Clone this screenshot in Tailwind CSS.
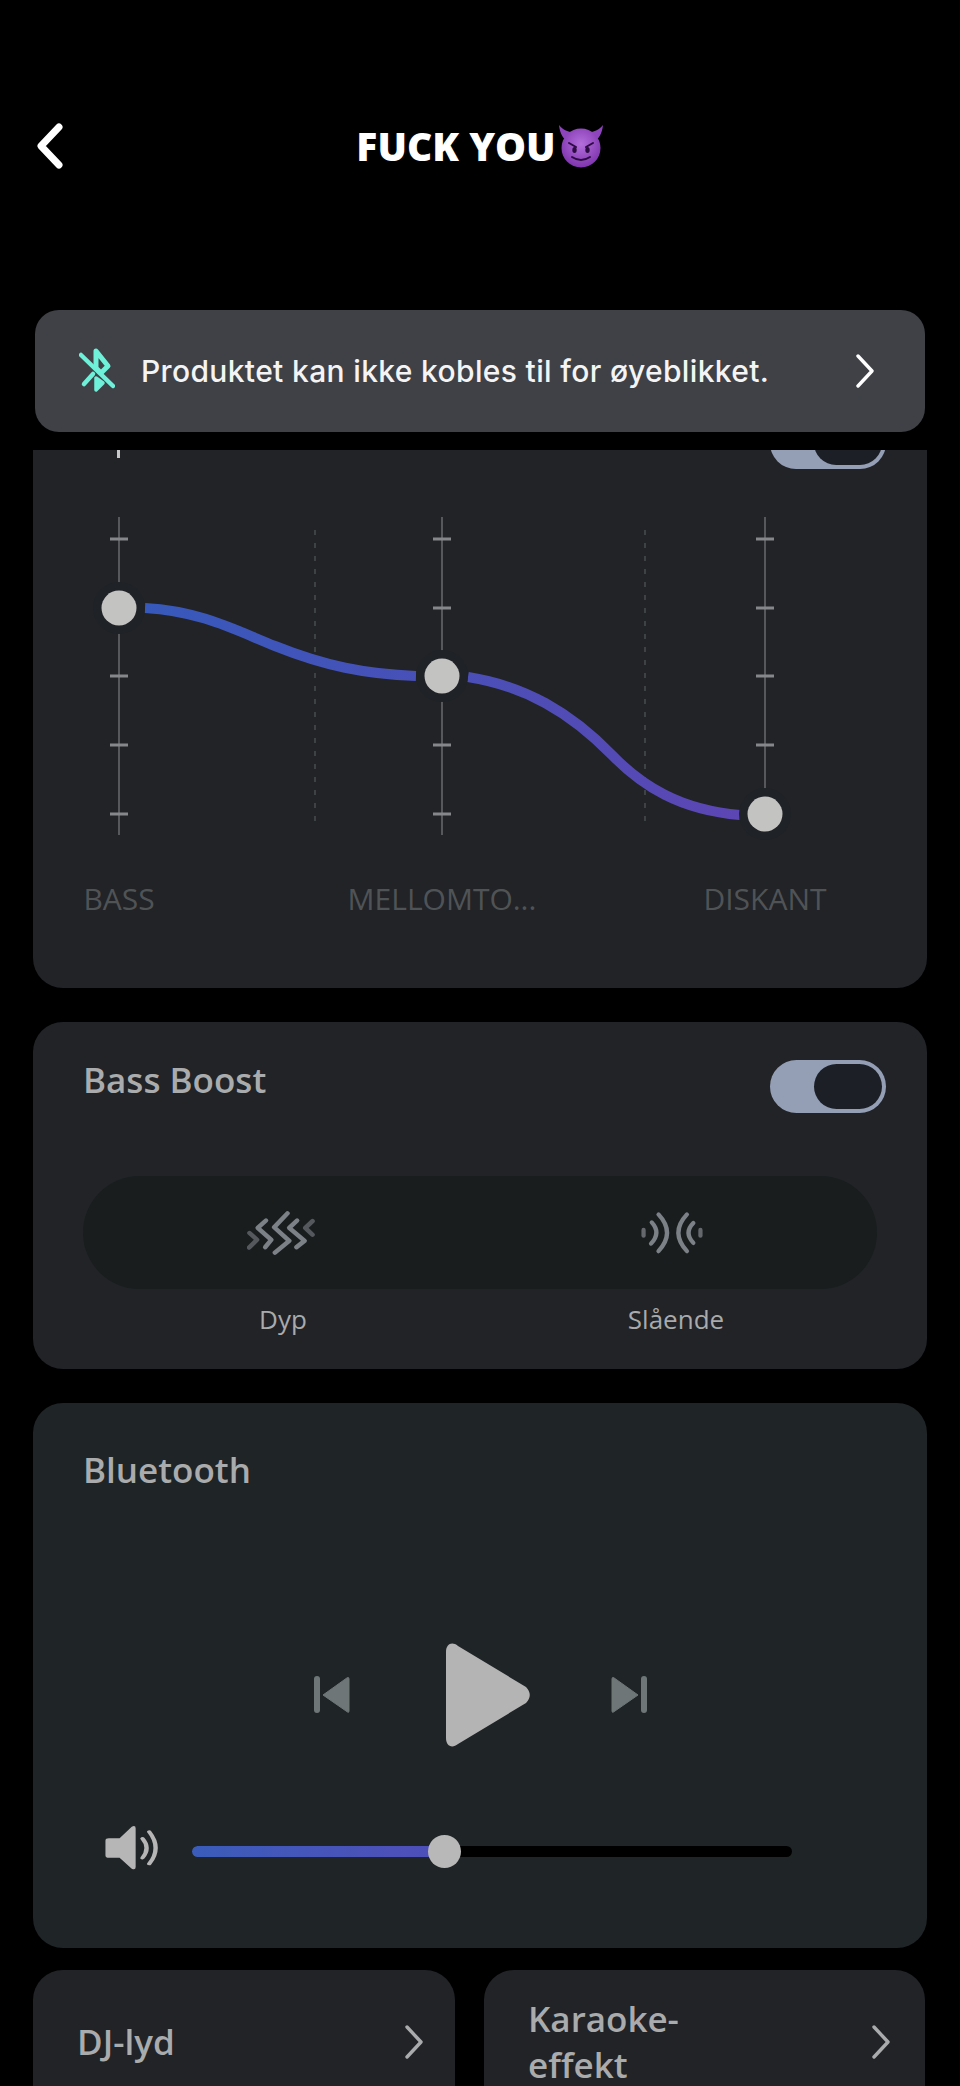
<!DOCTYPE html>
<html lang="en">
<head>
  <meta charset="UTF-8">
  <title>Equalizer</title>
  <script src="https://cdn.jsdelivr.net/npm/@tailwindcss/browser@4"></script>
</head>
<body class="bg-black font-['Open_Sans',sans-serif]">
<div class="w-[960px] h-[2086px] overflow-hidden px-[33px]">

  <!-- header -->
  <div class="relative h-[292px] pt-[121px] flex justify-center items-start">
    <svg class="absolute left-[1px] top-[122px]" width="34" height="48" viewBox="0 0 34 48" fill="none" stroke="#fff" stroke-width="7" stroke-linecap="round" stroke-linejoin="round"><path d="M25 5 L7 24 L25 43"/></svg>
    <div class="flex items-center h-[50px]">
      <span class="text-[39px] leading-[50px] font-extrabold text-white">FUCK YOU</span>
      <svg width="46" height="44" viewBox="0 0 46 44" class="mt-[-1px] ml-[2px]">
        <defs>
          <radialGradient id="face" cx="50%" cy="40%" r="65%"><stop offset="0" stop-color="#b56fdc"/><stop offset="1" stop-color="#7a30aa"/></radialGradient>
        </defs>
        <path d="M1 1 C2 10 5 15 11 18 L17 9 C10 8 5 6 1 1Z" fill="#8d44bd"/>
        <path d="M45 1 C44 10 41 15 35 18 L29 9 C36 8 41 6 45 1Z" fill="#8d44bd"/>
        <circle cx="23" cy="24" r="19.5" fill="url(#face)"/>
        <path d="M11 19 L18 23 M35 19 L28 23" stroke="#2c0c42" stroke-width="2" stroke-linecap="round"/>
        <ellipse cx="16.500" cy="26" rx="2.200" ry="3" fill="#2c0c42"/>
        <ellipse cx="29.500" cy="26" rx="2.200" ry="3" fill="#2c0c42"/>
        <path d="M14 33 Q23 39 32 33" fill="none" stroke="#2c0c42" stroke-width="2" stroke-linecap="round"/>
      </svg>
    </div>
  </div>

  <!-- not connected banner -->
  <div class="mx-[2px] mt-[18px] h-[122px] rounded-[24px] bg-[#3f4147] flex items-center pl-[44px] pr-[50px]">
    <svg width="36" height="46" viewBox="0 0 36 46" fill="none" stroke="#6ff0d8" class="shrink-0">
      <path d="M2 7 L34 38" stroke-width="4.500" stroke-linecap="round"/>
      <path d="M17 3 L29 18 L22 25 L17 20Z" stroke-width="5" stroke-linejoin="round"/>
      <path d="M5 36 L14 26" stroke-width="4.500" stroke-linecap="round"/>
      <path d="M17 30 L17 42 L24 35Z" fill="#6ff0d8" stroke-width="3.500" stroke-linejoin="round"/>
    </svg>
    <span class="ml-[26px] font-['Inter',sans-serif] text-[30px] tracking-[0.35px] font-medium text-[#f4f4f5] whitespace-nowrap flex-1">Produktet kan ikke kobles til for øyeblikket.</span>
    <svg width="20" height="34" viewBox="0 0 20 34" fill="none" stroke="#fff" stroke-width="3.4" stroke-linecap="round" stroke-linejoin="round" class="shrink-0"><path d="M3 2 L17 17 L3 32"/></svg>
  </div>

  <!-- equalizer card, top is scrolled under the banner -->
  <div class="mt-[18px] h-[538px] rounded-b-[30px] bg-[#212327] overflow-hidden relative">
    <div class="absolute right-[41px] top-[-33px] w-[116px] h-[52px] rounded-full bg-[#949fb6] p-[4px] flex justify-end">
      <div class="w-[68px] h-[44px] rounded-full bg-[#1c2026]"></div>
    </div>
    <svg width="894" height="420" viewBox="33 450 894 420" class="block" fill="none">
      <defs>
        <linearGradient id="eq" gradientUnits="userSpaceOnUse" x1="145" y1="0" x2="740" y2="0"><stop offset="0" stop-color="#3759bb"/><stop offset="1" stop-color="#5c46b4"/></linearGradient>
      </defs>
      <path d="M118.500 450V458" stroke="#c8c8c8" stroke-width="3"/>
      <g stroke="#56585c" stroke-width="2">
        <path d="M119 517V835M442 517V835M765 517V835"/>
      </g>
      <path d="M315 530V828M645 530V828" stroke="#4a4d50" stroke-width="1.500" stroke-dasharray="5 8"/>
      <g stroke="#85878a" stroke-width="3">
        <path d="M110 539h18M110 608h18M110 676h18M110 745h18M110 814h18"/>
        <path d="M433 539h18M433 608h18M433 676h18M433 745h18M433 814h18"/>
        <path d="M756 539h18M756 608h18M756 676h18M756 745h18M756 814h18"/>
      </g>
      <path d="M145 608 C200 611 235 630 275 646 C325 666 365 674 416 676" stroke="url(#eq)" stroke-width="10"/>
      <path d="M468 677 C525 686 570 712 612 755 C642 786 680 810 740 815" stroke="url(#eq)" stroke-width="10"/>
      <g fill="#1f2226">
        <circle cx="119" cy="608" r="26"/><circle cx="442" cy="676" r="26"/><circle cx="765" cy="814" r="26"/>
      </g>
      <g fill="#c3c3c2">
        <circle cx="119" cy="608" r="17.500"/><circle cx="442" cy="676" r="17.500"/><circle cx="765" cy="814" r="17.500"/>
      </g>
    </svg>
    <div class="mt-[8px] flex text-[30px] leading-[42px] text-[#505356]">
      <span class="w-[172px] text-center">BASS</span>
      <span class="w-[474px] text-center">MELLOMTO...</span>
      <span class="w-[172px] text-center">DISKANT</span>
    </div>
  </div>

  <!-- bass boost card -->
  <div class="mt-[34px] h-[347px] rounded-[30px] bg-[#212327] pt-[34px]">
    <div class="flex justify-between items-start pl-[50px] pr-[41px]">
      <span class="text-[35px] leading-[48px] font-semibold text-[#a9abad]">Bass Boost</span>
      <div class="mt-[4px] w-[116px] h-[53px] rounded-full bg-[#949fb6] p-[4px] flex justify-end">
        <div class="w-[68px] h-[45px] rounded-full bg-[#1c2026]"></div>
      </div>
    </div>
    <div class="mt-[63px] ml-[50px] w-[794px] h-[113px] rounded-full bg-[#191d1e] grid grid-cols-[396px_386px] items-center">
      <div class="flex justify-center">
        <svg width="68" height="44" viewBox="132 90 190 130" preserveAspectRatio="none" fill="none" stroke="#7c8087" stroke-width="13" stroke-linecap="round" stroke-linejoin="round">
          <path d="M245 97 L208 138 L250 178 L210 213"/>
          <path d="M185 118 L162 140 L200 175 L183 197"/>
          <path d="M272 118 L250 140 L293 178 L270 197"/>
          <path d="M315 120 L295 140 L315 160" stroke="#55585c"/>
          <path d="M139 155 L160 175 L138 198" stroke="#55585c"/>
        </svg>
      </div>
      <div class="flex justify-center">
        <svg width="64" height="44" viewBox="1235 95 180 128" preserveAspectRatio="none" fill="none" stroke="#7c8087" stroke-width="12" stroke-linecap="round">
          <path d="M1245 150V167" stroke="#65686d"/>
          <path d="M1268 128 Q1295 158 1266 190"/>
          <path d="M1287 105 Q1335 158 1287 212"/>
          <path d="M1367 105 Q1319 158 1367 212"/>
          <path d="M1385 130 Q1358 158 1385 188"/>
          <path d="M1405 150V167" stroke="#65686d"/>
        </svg>
      </div>
    </div>
    <div class="mt-[9px] ml-[50px] grid grid-cols-[400px_386px] text-[26px] leading-[42px] text-[#a8aaac] text-center">
      <span>Dyp</span>
      <span>Slående</span>
    </div>
  </div>

  <!-- playback card -->
  <div class="mt-[34px] h-[545px] rounded-[30px] bg-[#1f2426] pl-[50px] pt-[43px]">
    <div class="text-[35px] leading-[48px] font-semibold text-[#a9abad]">Bluetooth</div>
    <div class="mt-[149px] flex items-center h-[104px] pl-[231px]">
      <svg width="36" height="38" viewBox="0 0 36 38" fill="#6f7677">
        <rect x="0" y="0" width="6" height="37" rx="3"/>
        <path d="M9 19 L33.500 1.500 Q35 1 35 3 V35 Q35 37 33.500 36 Z" stroke="#6f7677" stroke-linejoin="round"/>
      </svg>
      <svg width="84" height="104" viewBox="0 0 84 104" fill="#b4b4b4" class="ml-[96px]">
        <path d="M0 9 C0 1 6 -2 12 3 L80 44 C85 49 85 55 80 60 L12 101 C6 106 0 103 0 95 Z"/>
      </svg>
      <svg width="36" height="38" viewBox="0 0 36 38" fill="#6f7677" class="ml-[81px]">
        <path d="M27 19 L2.500 1.500 Q1 1 1 3 V35 Q1 37 2.500 36 Z" stroke="#6f7677" stroke-linejoin="round"/>
        <rect x="30" y="0" width="6" height="37" rx="3"/>
      </svg>
    </div>
    <div class="mt-[77px] flex items-center h-[48px]">
      <svg width="56" height="46" viewBox="90 675 115 140" preserveAspectRatio="none" class="ml-[21px] shrink-0">
        <path d="M100 715 H122 L147 680 Q155 675 155 685 V803 Q155 813 147 808 L122 775 H100 Q93 775 93 768 V722 Q93 715 100 715Z" fill="#b6b6b6"/>
        <path d="M169 716 Q186 745 169 775" fill="none" stroke="#b6b6b6" stroke-width="9" stroke-linecap="round"/>
        <path d="M183 696 Q209 745 183 793" fill="none" stroke="#b6b6b6" stroke-width="9" stroke-linecap="round"/>
      </svg>
      <div class="relative ml-[32px] mt-[6px] w-[600px] h-[11px] rounded-full bg-black">
        <div class="h-[11px] w-[252px] rounded-l-full bg-gradient-to-r from-[#3a5cba] to-[#4f4eb8]"></div>
        <div class="absolute left-[236px] top-[-11px] w-[33px] h-[33px] rounded-full bg-[#b8b8b8]"></div>
      </div>
    </div>
  </div>

  <!-- bottom links -->
  <div class="mt-[22px] grid grid-cols-[422px_441px] gap-[29px]">
    <div class="h-[144px] rounded-t-[30px] bg-[#212327] flex items-center justify-between pl-[44px] pr-[31px]">
      <span class="text-[35px] leading-[46px] font-semibold text-[#a9abad]">DJ-lyd</span>
      <svg width="20" height="34" viewBox="0 0 20 34" fill="none" stroke="#a9abad" stroke-width="3.400" stroke-linecap="round" stroke-linejoin="round"><path d="M3 2 L17 17 L3 32"/></svg>
    </div>
    <div class="h-[144px] rounded-t-[30px] bg-[#212327] flex items-center justify-between pl-[44px] pr-[34px]">
      <span class="text-[35px] leading-[46px] font-semibold text-[#a9abad]">Karaoke-<br>effekt</span>
      <svg width="20" height="34" viewBox="0 0 20 34" fill="none" stroke="#a9abad" stroke-width="3.400" stroke-linecap="round" stroke-linejoin="round"><path d="M3 2 L17 17 L3 32"/></svg>
    </div>
  </div>

</div>
</body>
</html>
